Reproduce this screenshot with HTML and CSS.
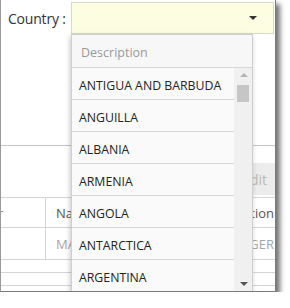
FILE: index.html
```html
<!DOCTYPE html>
<html lang="en">
<head>
	<meta charset="UTF-8">
	<meta name="viewport" content="width=device-width, initial-scale=1.0">
	<title>Country</title>
	<link rel="stylesheet" href="styles.css">
</head>
<body>
	<div class="window">
		<div class="form-row">
			<label class="label">Country :</label>
			<div class="combo"><span class="caret"></span></div>
		</div>

		<div class="panel">
			<div class="toolbar">
				<button class="btn" disabled>Edit</button>
			</div>
			<div class="grid">
				<div class="grid-row head">
					<div class="col c1"><span class="cut">r</span></div>
					<div class="col c2">Name</div>
					<div class="col c3">Description</div>
				</div>
				<div class="grid-row">
					<div class="col c1"></div>
					<div class="col c2 dim">MARKET</div>
					<div class="col c3 dim">MANAGER</div>
				</div>
				<div class="grid-row thin"></div>
				<div class="grid-row thin"></div>
			</div>
		</div>

		<div class="dropdown">
			<div class="dd-head">Description</div>
			<div class="dd-body">
				<ul class="dd-list">
					<li>ANTIGUA AND BARBUDA</li>
					<li>ANGUILLA</li>
					<li>ALBANIA</li>
					<li>ARMENIA</li>
					<li>ANGOLA</li>
					<li>ANTARCTICA</li>
					<li>ARGENTINA</li>
				</ul>
				<div class="scrollbar">
					<span class="arrow up"></span>
					<span class="thumb"></span>
					<span class="arrow down"></span>
				</div>
			</div>
		</div>
	</div>
</body>
</html>
```

FILE: styles.css
```css
body {
	margin: 0;
	background: #fff;
	font-family: "Open Sans", "Noto Sans", sans-serif;
	color: #333;
}

.window {
	position: relative;
	width: 274px;
	height: 291px;
	border-left: 1px solid #9a9a9a;
	border-right: 1px solid #7a7a7a;
	border-bottom: 1px solid #7a7a7a;
	box-shadow: 4px 4px 5px rgba(0, 0, 0, 0.55);
	background: #fff;
	overflow: hidden;
}

.form-row {
	display: flex;
	align-items: center;
	height: 32px;
	padding: 2px 1px 0 7px;
}

.label {
	width: 63px;
	font-size: 14px;
	color: #333;
	letter-spacing: -0.2px;
}

.combo {
	position: relative;
	flex: 1;
	height: 30px;
	border: 1px solid #d8d8c8;
	background: #fdfde2;
}

.caret {
	position: absolute;
	right: 16px;
	top: 13px;
	border-left: 4px solid transparent;
	border-right: 4px solid transparent;
	border-top: 4px solid #333;
}

.panel {
	margin-top: 111px;
	border-top: 1px solid #c4c4c4;
}

.toolbar {
	display: flex;
	justify-content: flex-end;
	padding-top: 17px;
}

.btn {
	height: 32px;
	width: 40px;
	border: none;
	background: #ececec;
	color: #b9b9b9;
	font-family: "Open Sans", sans-serif;
	font-size: 14px;
	padding: 0 8px 0 0;
	text-align: right;
}

.grid {
	margin-top: 2px;
	border-top: 1px solid #d4d4d4;
}

.grid-row {
	display: flex;
	height: 31px;
	border-bottom: 1px solid #d4d4d4;
	font-size: 13px;
}

.grid-row.head {
	height: 29px;
	color: #555;
}

.grid-row.thin {
	height: 12px;
}

.col {
	display: flex;
	align-items: center;
	overflow: hidden;
	white-space: nowrap;
}

.c1 {
	width: 44px;
	border-right: 1px solid #d4d4d4;
}

.c2 {
	flex: 1;
	padding-left: 10px;
}

.c3 {
	width: 22px;
	justify-content: flex-end;
	padding-right: 1px;
}

.dim {
	color: #a6a6a6;
}

.cut {
	margin-left: -3px;
	color: #888;
}

.dropdown {
	position: absolute;
	left: 70px;
	top: 34px;
	width: 180px;
	height: 270px;
	border: 1px solid #cfcfcf;
	background: #fafafa;
	box-shadow: -1px 2px 5px rgba(0, 0, 0, 0.22);
}

.dd-head {
	height: 32px;
	line-height: 36px;
	padding-left: 9px;
	font-size: 12.5px;
	color: #9a9a9a;
	background: #f7f7f7;
	border-bottom: 1px solid #d6d6d6;
}

.dd-body {
	display: flex;
}

.dd-list {
	flex: 1;
	margin: 0;
	padding: 0;
	list-style: none;
}

.dd-list li {
	height: 31px;
	line-height: 35px;
	padding-left: 7px;
	font-size: 12.3px;
	color: #222;
	border-bottom: 1px solid #d6d6d6;
	white-space: nowrap;
}

.scrollbar {
	position: relative;
	width: 18px;
	background: #f0f0f0;
}

.thumb {
	position: absolute;
	left: 3px;
	top: 17px;
	width: 12px;
	height: 17px;
	background: #c6c6c6;
}

.arrow {
	position: absolute;
	left: 6px;
	border-left: 4px solid transparent;
	border-right: 4px solid transparent;
}

.arrow.up {
	top: 5px;
	border-bottom: 4px solid #b4b4b4;
}

.arrow.down {
	top: 214px;
	border-top: 4px solid #555;
}
```
